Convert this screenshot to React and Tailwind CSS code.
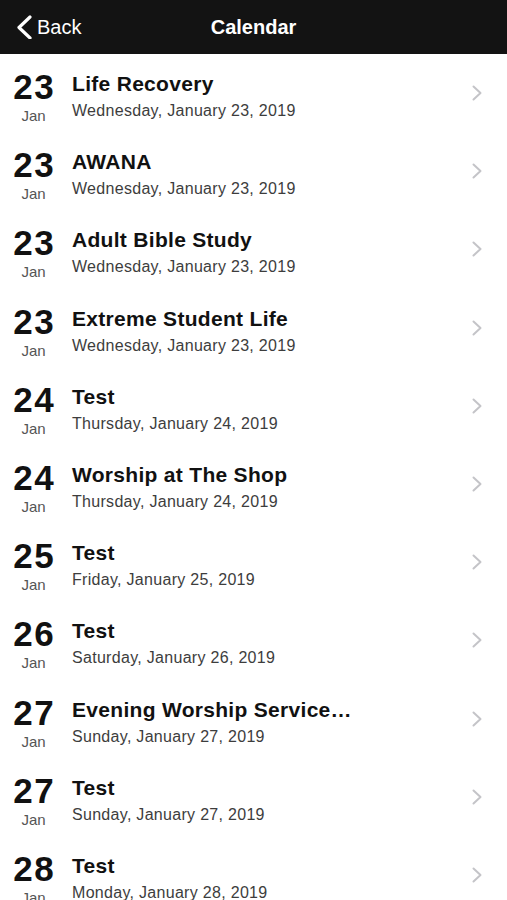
import React from "react";

const events = [
  { d: "23", t: "Life Recovery", s: "Wednesday, January 23, 2019" },
  { d: "23", t: "AWANA", s: "Wednesday, January 23, 2019" },
  { d: "23", t: "Adult Bible Study", s: "Wednesday, January 23, 2019" },
  { d: "23", t: "Extreme Student Life", s: "Wednesday, January 23, 2019" },
  { d: "24", t: "Test", s: "Thursday, January 24, 2019" },
  { d: "24", t: "Worship at The Shop", s: "Thursday, January 24, 2019" },
  { d: "25", t: "Test", s: "Friday, January 25, 2019" },
  { d: "26", t: "Test", s: "Saturday, January 26, 2019" },
  { d: "27", t: "Evening Worship Service\u2026", s: "Sunday, January 27, 2019" },
  { d: "27", t: "Test", s: "Sunday, January 27, 2019" },
  { d: "28", t: "Test", s: "Monday, January 28, 2019" },
];

function Row({ e }) {
  return (
    <div className="flex items-start h-[78.2px] shrink-0">
      <div className="w-[53px] ml-[7px] mt-[15px] flex flex-col items-center">
        <div className="text-[35px] leading-[35px] font-bold text-[#111] tracking-[1.5px] pl-[1.5px]">{e.d}</div>
        <div className="text-[15px] leading-[15px] text-[#555] mt-[4px]">Jan</div>
      </div>
      <div className="ml-[12px] mt-[18px] flex flex-col">
        <div className="text-[21px] leading-[24px] font-bold text-[#111] tracking-[0.3px]">{e.t}</div>
        <div className="text-[16px] leading-[20px] text-[#3d3d3d] mt-[5px] tracking-[0.3px]">{e.s}</div>
      </div>
      <div className="ml-auto self-center mr-[25px]">
        <svg width="10" height="16" viewBox="0 0 10 16">
          <polyline points="1.5,1.5 8.5,8 1.5,14.5" fill="none" stroke="#c4c4c8" strokeWidth="2" strokeLinecap="round" strokeLinejoin="round" />
        </svg>
      </div>
    </div>
  );
}

export default function App() {
  return (
    <div className="w-[507px] h-[900px] overflow-hidden bg-white flex flex-col" style={{ fontFamily: '"Liberation Sans", Arial, sans-serif' }}>
      <div className="h-[54px] shrink-0 bg-[#131313] relative flex items-center">
        <div className="flex items-center pl-[16px]">
          <svg width="18" height="24" viewBox="0 0 18 24">
            <polyline points="14,2 3,12.5 14,23" fill="none" stroke="#fff" strokeWidth="3.2" strokeLinecap="round" strokeLinejoin="round" />
          </svg>
          <span className="text-white text-[20px] ml-[3px]">Back</span>
        </div>
        <div className="absolute left-0 right-0 text-center text-white text-[20px] font-bold pointer-events-none">Calendar</div>
      </div>
      <div className="flex flex-col">
        {events.map((e, i) => (
          <Row key={i} e={e} />
        ))}
      </div>
    </div>
  );
}
